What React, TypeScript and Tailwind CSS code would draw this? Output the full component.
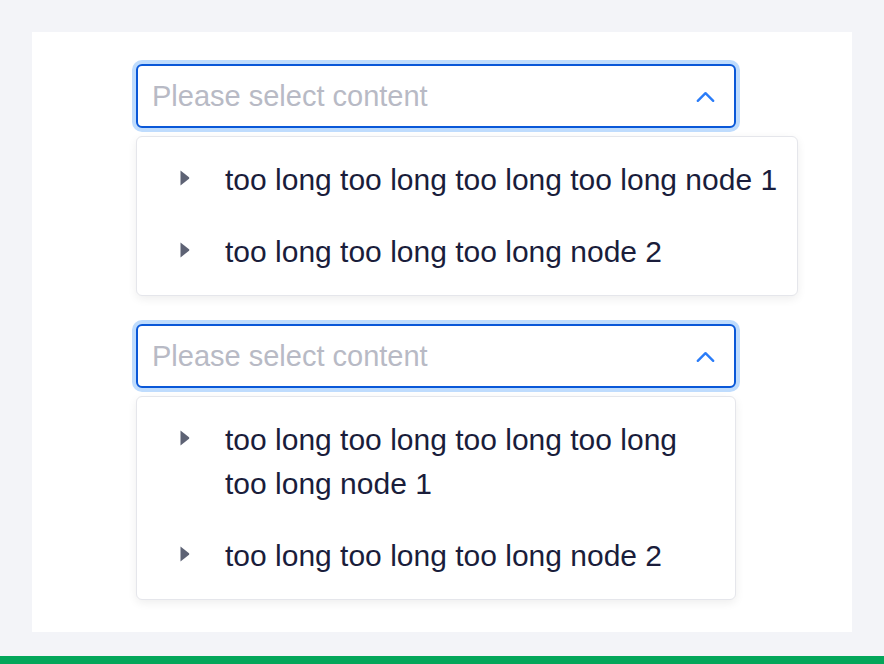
type Node = { label: string };

const NODES_A: Node[] = [
  { label: "too long too long too long too long node 1" },
  { label: "too long too long too long node 2" },
];

const NODES_B: Node[] = [
  { label: "too long too long too long too long too long node 1" },
  { label: "too long too long too long node 2" },
];

function Caret() {
  return (
    <svg width="10" height="16" viewBox="0 0 10 16" aria-hidden="true">
      <path d="M0.5 0.5 L9 7.3 Q9.6 8 9 8.7 L0.5 15.5 Z" fill="#5d6274" />
    </svg>
  );
}

function Chevron() {
  return (
    <svg width="19" height="13" viewBox="0 0 19 13" fill="none" aria-hidden="true">
      <path
        d="M1.8 10.8 L9.5 3.2 L17.2 10.8"
        stroke="#2a7cf8"
        strokeWidth="2.4"
        strokeLinecap="round"
        strokeLinejoin="round"
      />
    </svg>
  );
}

function SelectBox() {
  return (
    <div className="w-[600px] h-16 rounded-md border-2 border-[#0a58d8] ring-4 ring-[#bfdcfd] bg-white flex items-center pl-[14px] pr-[19px]">
      <span className="flex-1 text-[29px] leading-none text-[#b8bac5] whitespace-nowrap">
        Please select content
      </span>
      <Chevron />
    </div>
  );
}

function Dropdown({ nodes, width }: { nodes: Node[]; width: string }) {
  return (
    <div
      className={`${width} mt-2 rounded-md border border-[#e5e6eb] bg-white shadow-[0_3px_10px_rgba(0,0,0,0.07)] py-[7px] px-2`}
    >
      {nodes.map((n) => (
        <div key={n.label} className="flex items-start py-[14px] pl-[35px]">
          <div className="h-[44px] flex items-center shrink-0 pb-1">
            <Caret />
          </div>
          <p className="ml-[35px] text-[30px] leading-[44px] text-[#1a1d3b]">{n.label}</p>
        </div>
      ))}
    </div>
  );
}

export default function App() {
  return (
    <div
      className="min-h-[664px] bg-[#f3f4f8] flex flex-col pt-8"
      style={{ fontFamily: '"Liberation Sans", Arial, sans-serif' }}
    >
      <div className="mx-8 h-[600px] bg-white pt-8 pl-[104px]">
        <SelectBox />
        <Dropdown nodes={NODES_A} width="w-[662px] whitespace-nowrap" />
        <div className="mt-7">
          <SelectBox />
        </div>
        <Dropdown nodes={NODES_B} width="w-[600px]" />
      </div>
      <div className="mt-6 h-2 bg-[#03a65a]" />
    </div>
  );
}
